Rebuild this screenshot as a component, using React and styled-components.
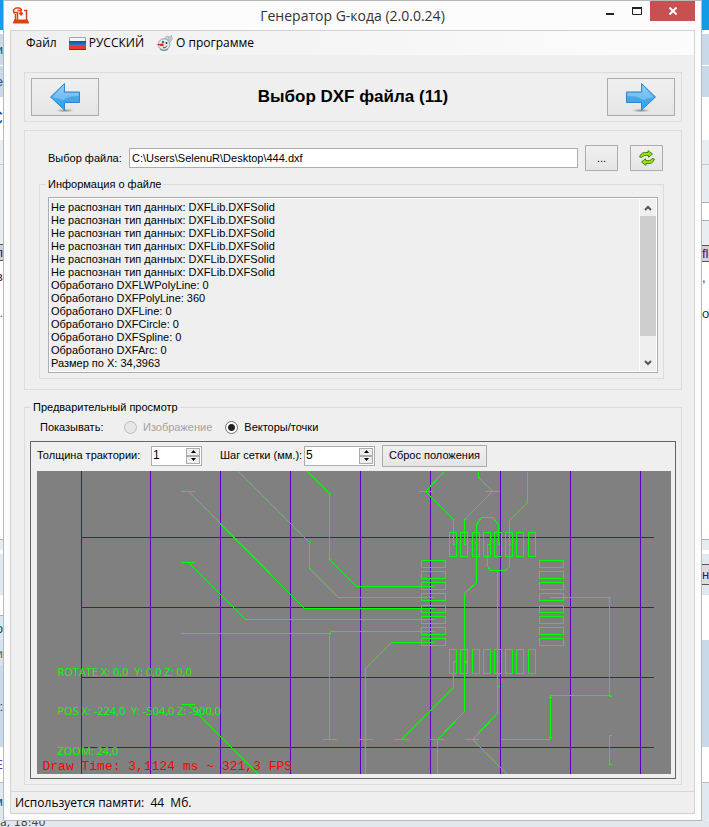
import React, { useState } from 'react';
import styled, { createGlobalStyle } from 'styled-components';

const GlobalStyle = createGlobalStyle`
    * {
        box-sizing: border-box;
    }

    body {
        margin: 0;
        background: #fff;
        color: #000;
        font-family: 'Liberation Sans', Arial, sans-serif;
        font-size: 11px;
        line-height: 13px;
    }

    button, input, textarea {
        font: inherit;
        color: inherit;
    }
`;

/* ---------- desktop behind the window ---------- */

const Desktop = styled.div`
    display: grid;
    grid-template-columns: 3px minmax(0, 1fr) 7px;
    grid-template-rows: auto 1fr;
    min-height: 100vh;
    overflow: hidden;
`;

const Strip = styled.div`
    display: flex;
    flex-direction: column;
    min-width: 0;
    overflow: hidden;
    box-shadow: inset ${p => (p.$side === 'right' ? '3px' : '-1px')} 0 3px rgba(0, 0, 0, 0.15);
`;

const Segment = styled.div`
    display: flex;
    align-items: center;
    justify-content: ${p => (p.$end ? 'flex-end' : 'flex-start')};
    flex: none;
    height: ${p => p.$h}px;
    background: ${p => p.$bg || 'transparent'};
    color: ${p => p.$color || '#333'};
    font-size: ${p => p.$size || 13}px;
    white-space: nowrap;
    overflow: hidden;
`;

const BottomStrip = styled.div`
    grid-column: 1 / -1;
    display: flex;
    align-items: flex-end;
    height: 7px;
    overflow: hidden;
    background: #dfe9ef;
    color: #444;
    font-family: 'DejaVu Sans', sans-serif;
    font-size: 11px;
    line-height: 11px;
`;

/* ---------- window ---------- */

const Window = styled.div`
    display: flex;
    flex-direction: column;
    padding: 0 6px 6px;
    border: 1px solid #b9b9b9;
    background: #fcfcfc;
`;

const TitleBar = styled.header`
    display: grid;
    grid-template-columns: 108px 1fr 108px;
    height: 29px;
`;

const AppMark = styled.div`
    padding: 5px 0 0 2px;
`;

const Title = styled.h1`
    margin: 0;
    font-family: 'Open Sans', 'Noto Sans', sans-serif;
    font-size: 14px;
    font-weight: 400;
    line-height: 29px;
    text-align: center;
    color: #333;
`;

const WindowButtons = styled.div`
    display: flex;
    justify-content: flex-end;
    align-items: flex-start;
`;

const WindowButton = styled.button`
    display: flex;
    align-items: center;
    justify-content: center;
    width: ${p => (p.$close ? 45 : 27)}px;
    height: 20px;
    padding: 0;
    border: none;
    background: ${p => (p.$close ? '#c75050' : 'transparent')};
`;

const Client = styled.div`
    flex: 1;
    display: flex;
    flex-direction: column;
    border: 1px solid #d2d2d2;
    background: #efefef;
`;

const Menu = styled.nav`
    display: flex;
    align-items: center;
    gap: 12px;
    height: 24px;
    padding-left: 15px;
    background: linear-gradient(to right, #efefef, #fcfcfc);
`;

const MenuItem = styled.button`
    display: flex;
    align-items: center;
    gap: 3px;
    padding: 0;
    border: none;
    background: none;
    font-family: 'Open Sans', 'Noto Sans', sans-serif;
    font-size: 12px;
    line-height: 16px;
`;

const Content = styled.main`
    display: flex;
    flex-direction: column;
    padding: 17px 12px 6px 13px;
`;

const Wizard = styled.section`
    display: flex;
    align-items: center;
    justify-content: space-between;
    height: 50px;
    padding: 0 6px;
    border: 1px solid #dcdcdc;
`;

const StepTitle = styled.h2`
    margin: 0;
    font-size: 17px;
    font-weight: 700;
    line-height: 20px;
`;

const Button = styled.button`
    display: flex;
    align-items: center;
    justify-content: center;
    flex: none;
    width: ${p => p.$w}px;
    height: ${p => p.$h}px;
    padding: 0;
    border: 1px solid #acacac;
    background: linear-gradient(#f0f0f0, #e5e5e5);
    white-space: nowrap;
`;

/* ---------- file section ---------- */

const FilePanel = styled.section`
    margin-top: 8px;
    padding: 14px 17px 10px 14px;
    border: 1px solid #dcdcdc;
`;

const FileRow = styled.div`
    display: flex;
    align-items: center;
    padding: 0 1px 0 9px;
`;

const FileLabel = styled.label`
    flex: none;
    width: 81px;
`;

const FileInput = styled.input`
    flex: 1;
    min-width: 0;
    height: 20px;
    margin-right: 7px;
    padding: 0 2px;
    border: 1px solid #abadb3;
    background: #fff;
`;

const Refresh = styled(Button)`
    margin-left: 12px;
`;

const Group = styled.fieldset`
    min-width: 0;
    margin: ${p => p.$top}px 0 0;
    padding: ${p => p.$pad};
    border: 1px solid #dcdcdc;
`;

const Legend = styled.legend`
    margin-left: ${p => p.$left}px;
    padding: 0 2px;
    line-height: 13px;
`;

const LogBox = styled.div`
    display: flex;
    height: 176px;
    padding: 1px;
    border: 1px solid #abadb3;
    background: #fff;
`;

const Log = styled.textarea`
    flex: 1;
    display: block;
    min-width: 0;
    padding: 2px 1px;
    border: none;
    background: #efefef;
    line-height: 13px;
    resize: none;
    overflow: hidden;
`;

const ScrollBar = styled.div`
    display: flex;
    flex-direction: column;
    width: 16px;
    margin-left: 1px;
    background: #efefef;
`;

const ScrollArrow = styled.button`
    display: flex;
    align-items: center;
    justify-content: center;
    height: 17px;
    padding: 0;
    border: none;
    background: none;
`;

const Track = styled.div`
    flex: 1;
`;

const Thumb = styled.div`
    height: 120px;
    background: #cdcdcd;
`;

/* ---------- preview section ---------- */

const ModeRow = styled.div`
    display: flex;
    align-items: center;
    height: 27px;
    padding-left: 10px;
`;

const ModeCaption = styled.span`
    width: 84px;
`;

const RadioLabel = styled.label`
    display: flex;
    align-items: center;
    gap: 6px;
    margin-right: 13px;
    color: ${p => (p.$disabled ? '#a3a3a3' : '#000')};
`;

const Radio = styled.input`
    appearance: none;
    width: 13px;
    height: 13px;
    margin: 0;
    border: 1px solid #707070;
    border-radius: 50%;
    background: #fff;

    &:checked {
        background: radial-gradient(circle, #222 0 3px, #fff 4px);
    }

    &:disabled {
        border-color: #bcbcbc;
        background: #e6e6e6;
    }
`;

const Viewport = styled.div`
    padding: 0 4px 4px 6px;
    border: 1px solid #646464;
`;

const Toolbar = styled.div`
    display: flex;
    align-items: center;
    height: 29px;
    padding-bottom: 2px;
`;

const ToolLabel = styled.label`
    flex: none;
    width: ${p => p.$w}px;
    white-space: nowrap;
`;

const Spin = styled.div`
    display: flex;
    flex: none;
    width: ${p => p.$w}px;
    height: 20px;
    margin-right: ${p => p.$gap}px;
    padding: 1px;
    border: 1px solid #abadb3;
    background: #fff;
`;

const SpinInput = styled.input`
    flex: 1;
    min-width: 0;
    padding: 0;
    border: none;
    background: none;
    font-size: 12px;
    appearance: textfield;

    &::-webkit-inner-spin-button {
        appearance: none;
        margin: 0;
    }
`;

const SpinButtons = styled.div`
    display: grid;
    grid-template-rows: 1fr 1fr;
    width: 14px;
`;

const SpinButton = styled.button`
    display: flex;
    align-items: center;
    justify-content: center;
    padding: 0;
    border: 1px solid #acacac;
    background: #efefef;
`;

const Canvas = styled.svg`
    display: block;
    width: 100%;
    height: auto;
    background: #808080;
`;

const Hud = styled.text`
    font-family: 'Open Sans', sans-serif;
    font-size: 11px;
    fill: #00ff00;
    white-space: pre;
`;

const DrawTime = styled.text`
    font-family: 'Liberation Mono', monospace;
    font-size: 13px;
    fill: #ff0000;
`;

const StatusBar = styled.footer`
    flex: 1;
    display: flex;
    align-items: center;
    min-height: 22px;
    padding-left: 4px;
    border-top: 1px solid #d7d7d7;
    font-family: 'Open Sans', 'Noto Sans', sans-serif;
    font-size: 12px;
    line-height: 16px;
    white-space: pre;
`;

/* ---------- icons ---------- */

const AppIcon = () => (
    <svg width="18" height="18" viewBox="0 0 18 18" fill="none" stroke="#dc4310" strokeWidth="1.5">
        <path d="M3.500 14V8M2 7.500L1.500 4 4 2h3.500l2.500 2" />
        <path d="M2 6.500h3.500V14M5.500 4.500h3M12 4.500h3.500M14.500 4v10M9 3.500v4.500" />
        <path d="M7 7l2 2.500L11 7z" fill="#dc4310" strokeWidth="1" />
        <path d="M1 16.500h16M2 14.500h14" strokeWidth="2" />
    </svg>
);

const FlagIcon = () => (
    <svg width="17" height="13" viewBox="0 0 17 13">
        <defs>
            <linearGradient id="flagBlue" x1="0" y1="0" x2="0" y2="1">
                <stop offset="0" stopColor="#174f96" />
                <stop offset="1" stopColor="#2c86d4" />
            </linearGradient>
        </defs>
        <path d="M0.500 0.500h16v12h-16z" fill="#f4f4f4" stroke="#a5a5a5" />
        <path d="M0 4h17v5H0z" fill="url(#flagBlue)" />
        <path d="M0 9h17v4H0z" fill="#e8392a" />
        <path d="M0 12h17v1H0z" fill="#b51d13" />
    </svg>
);

const SnowmanIcon = () => (
    <svg width="17" height="17" viewBox="0 0 17 17">
        <path d="M9 4l1.500-3L13 2l2.500-1.500.8 3.500-3.300 5z" fill="#d5e0e4" stroke="#91a3aa" strokeWidth=".7" />
        <path d="M12.500 2l-.5 3M14.800 2.500l-1.800 3.500" stroke="#91a3aa" strokeWidth=".8" />
        <circle cx="8" cy="9.500" r="5.800" fill="#dfe8eb" stroke="#84949a" strokeWidth=".8" />
        <path d="M4 14q4 3 8 0" fill="none" stroke="#7d8f96" strokeWidth="1.200" />
        <circle cx="7" cy="7" r=".9" fill="#222" />
        <circle cx="10.500" cy="8" r=".9" fill="#222" />
        <path d="M7.500 8.500v2.700L5 11 .3 9.300z" fill="#e8221c" />
        <path d="M7 12.800q2.500.7 3.800-2" fill="none" stroke="#333" strokeWidth=".9" />
    </svg>
);

const ArrowIcon = ({ right }) => (
    <svg width="32" height="32" viewBox="0 0 32 32">
        <defs>
            <linearGradient id="arrowFill" x1="0" y1="0" x2="0" y2="1">
                <stop offset="0" stopColor="#7ccaf8" />
                <stop offset=".5" stopColor="#4da6e8" />
                <stop offset="1" stopColor="#16aefc" />
            </linearGradient>
            <radialGradient id="arrowShade">
                <stop offset="0" stopColor="#555" stopOpacity=".6" />
                <stop offset="1" stopColor="#555" stopOpacity="0" />
            </radialGradient>
        </defs>
        <ellipse cx="16" cy="29.500" rx="9" ry="2" fill="url(#arrowShade)" />
        <g transform={right ? 'translate(32 0) scale(-1 1)' : undefined}>
            <path
                d="M1.500 16L15.500 2.500V11h15v10.500h-15V29z"
                fill="url(#arrowFill)"
                stroke="#2f87cf"
                strokeLinejoin="round"
            />
            <path d="M3.500 16L14.500 5v7h15v3q-12 0-15 4z" fill="#b9e2fc" opacity=".4" />
        </g>
    </svg>
);

const RefreshIcon = () => (
    <svg width="16" height="16" viewBox="0 0 16 16" fill="#a4dc0c" stroke="#3f8a12" strokeLinejoin="round">
        <path d="M.6 7Q2 1.500 9 2.500V.6L13.500 4 9.500 7.300V5.700Q4.500 4.500 2.800 7.500z" />
        <path d="M15.400 9Q14 14.500 7 13.500v1.900L2.500 12l4-3.300v1.600q5 1.200 6.700-1.800z" />
    </svg>
);

const Chevron = ({ down }) => (
    <svg width="8" height="6" viewBox="0 0 8 6">
        <path d={down ? 'M1 1l3 3 3-3' : 'M1 5l3-3 3 3'} fill="none" stroke="#555" strokeWidth="2" />
    </svg>
);

const Triangle = ({ down }) => (
    <svg width="5" height="3" viewBox="0 0 5 3">
        <path d={down ? 'M0 0h5L2.500 3z' : 'M0 3h5L2.500 0z'} />
    </svg>
);

/* ---------- data ---------- */

const LOG = [
    ...Array(6).fill('Не распознан тип данных: DXFLib.DXFSolid'),
    'Обработано DXFLWPolyLine: 0',
    'Обработано DXFPolyLine: 360',
    'Обработано DXFLine: 0',
    'Обработано DXFCircle: 0',
    'Обработано DXFSpline: 0',
    'Обработано DXFArc: 0',
    'Размер по X: 34,3963',
].join('\n');

const GRID_X = [81, 150, 220, 290, 360, 430, 500, 570, 640];
const GRID_Y = [537, 607, 677, 747];

const PAD_COLS = [449, 460, 472, 483, 494, 505, 516, 528];
const PAD_ROWS = [560, 571, 582, 593, 605, 616, 627, 638];

const TRACES = [
    'M180 491h14M188 491L304 608H434',
    'M180 562h14M188 562L245 619H434',
    'M238 471L309 542V568L338 597H434',
    'M308 542h2M308 568h2M328 493h2M328 559h2',
    'M307 471L329 493V559L356 586H434',
    'M180 633H330V631H434M329 633V739M322 739h14',
    'M434 642H391L365 668V774M358 739h14',
    'M180 704h14M188 704L258 774',
    'M442 471v2L425 491L453 519V544M418 491h14M441 473h2M452 519h2M452 544h2',
    'M478 471v6L492 491L464 519V544M485 491h14M477 477h2M463 519h2M463 544h2',
    'M527 471V502L509 520V566L505 570H490L487 566V544M486 544h3M508 544h2',
    'M498 544V524L492 517H481L476 524V582L464 593V711L437 739V774M429 739h14',
    'M475 524h2M497 544h2M475 544h2M463 661h3v2',
    'M497 570V713L472 739L507 774M464 739h14M496 686h3M496 661h2',
    'M453 661V687L401 739M393 739h15M452 661h3',
    'M549 597H610M609 597V696M608 696h3M610 695H550V738M549 739H500M548 697h3M548 737h3',
    'M609 735V764M608 735h3M608 764h3',
];

const LEFT_STRIP = [
    { h: 30, bg: '#149be6' },
    { h: 4, bg: '#fff' },
    { h: 31, bg: '#c8d9e9', text: 'и', color: '#20538c' },
    { h: 1, bg: '#fff' },
    { h: 31, bg: '#c8d9e9', text: 'е', color: '#20538c' },
    { h: 43, bg: '#fff', text: 'С', color: '#20538c', size: 18 },
    { h: 24, bg: '#e8eef1' },
    { h: 1, bg: '#c2c8cc' },
    { h: 79, bg: '#e8eef1' },
    { h: 1, bg: '#555' },
    { h: 15, bg: '#d2d2d2', text: 'п', color: '#50008c' },
    { h: 1, bg: '#555' },
    { h: 30, bg: '#fff', text: 'в', color: '#50203c' },
    { h: 42, bg: '#fff', text: 'о.', color: '#8a6030' },
    { h: 206, bg: '#fff' },
    { h: 1, bg: '#aab2b8' },
    { h: 10, bg: '#e6edf1' },
    { h: 4, bg: '#fff' },
    { h: 41, bg: '#dfe9ef' },
    { h: 20, bg: '#fff' },
    { h: 1, bg: '#aab2b8' },
    { h: 24, bg: '#dbe7f0', text: 'До', color: '#174a86' },
    { h: 26, bg: '#d4e3ef', text: 'и', color: '#8a6030' },
    { h: 81, bg: '#c8d9e9', text: ':', color: '#174a86' },
    { h: 35, bg: '#fff', text: 'Е', color: '#703090' },
    { h: 1, bg: '#bbb' },
    { h: 37, bg: '#dfe9ef', text: 'м', color: '#20538c' },
];

const RIGHT_STRIP = [
    { h: 30, bg: '#149be6' },
    { h: 4, bg: '#fff' },
    { h: 31, bg: '#c8d9e9' },
    { h: 1, bg: '#fff' },
    { h: 31, bg: '#c8d9e9' },
    { h: 43, bg: '#fff' },
    { h: 24, bg: '#e8eef1' },
    { h: 1, bg: '#c2c8cc' },
    { h: 37, bg: '#e8eef1' },
    { h: 1, bg: '#aab2b8' },
    { h: 17, bg: '#fff' },
    { h: 1, bg: '#aab2b8' },
    { h: 24, bg: '#e8eef1' },
    { h: 1, bg: '#555' },
    { h: 15, bg: '#d2d2d2', text: 'flo', color: '#50008c' },
    { h: 1, bg: '#555' },
    { h: 30, bg: '#fff', text: ' ,' },
    { h: 42, bg: '#fff', text: 'о' },
    { h: 205, bg: '#fff' },
    { h: 1, bg: '#aab2b8' },
    { h: 10, bg: '#e6edf1' },
    { h: 4, bg: '#fff' },
    { h: 10, bg: '#dfe9ef' },
    { h: 1, bg: '#555' },
    { h: 19, bg: '#dcdcdc', text: 'н', color: '#50008c' },
    { h: 1, bg: '#555' },
    { h: 10, bg: '#dfe9ef' },
    { h: 45, bg: '#fff' },
    { h: 107, bg: '#c8d9e9' },
    { h: 35, bg: '#fff' },
    { h: 1, bg: '#bbb' },
    { h: 37, bg: '#dfe9ef' },
];

const BackgroundStrip = ({ side, items }) => (
    <Strip $side={side} aria-hidden="true">
        {items.map((s, i) => (
            <Segment key={i} $h={s.h} $bg={s.bg} $color={s.color} $size={s.size} $end={side === 'left'}>
                {s.text}
            </Segment>
        ))}
    </Strip>
);

const NumberField = ({ id, width, gap, value, onChange }) => (
    <Spin $w={width} $gap={gap}>
        <SpinInput id={id} type="number" value={value} onChange={e => onChange(Number(e.target.value))} />
        <SpinButtons>
            <SpinButton aria-label="Больше" onClick={() => onChange(value + 1)}><Triangle /></SpinButton>
            <SpinButton aria-label="Меньше" onClick={() => onChange(value - 1)}><Triangle down /></SpinButton>
        </SpinButtons>
    </Spin>
);

const Preview = () => (
    <Canvas viewBox="36.5 470.5 634 303" role="img" aria-label="Векторы">
        <g fill="none" stroke="#00ff00" shapeRendering="crispEdges">
            <path
                stroke="#5a00be"
                d={GRID_X.map(x => `M${x} 470V774`).join('') + GRID_Y.map(y => `M81 ${y}H653`).join('')}
            />
            {PAD_COLS.map(x => (
                <path key={x} d={`M${x} 532h7v24h-7zM${x} 649h7v24h-7z`} />
            ))}
            {PAD_ROWS.map(y => (
                <path key={y} d={`M421 ${y}h24v7h-24zM539 ${y}h24v7h-24z`} />
            ))}
            {TRACES.map(d => (
                <path key={d} d={d} />
            ))}
        </g>
        <Hud x="57" y="675">ROTATE X: 0,0  Y: 0,0 Z: 0,0</Hud>
        <Hud x="57" y="714">POS X: -224,0  Y: -504,0 Z: -900,0</Hud>
        <Hud x="57" y="754">ZOOM: 24,0</Hud>
        <DrawTime x="42" y="769">Draw Time: 3,1124 ms ~ 321,3 FPS</DrawTime>
    </Canvas>
);

const App = () => {
    const [file, setFile] = useState('C:\\Users\\SelenuR\\Desktop\\444.dxf');
    const [thickness, setThickness] = useState(1);
    const [step, setStep] = useState(5);

    return (
        <Desktop>
            <GlobalStyle />
            <BackgroundStrip side="left" items={LEFT_STRIP} />
            <Window>
                <TitleBar>
                    <AppMark><AppIcon /></AppMark>
                    <Title>Генератор G-кода (2.0.0.24)</Title>
                    <WindowButtons>
                        <WindowButton aria-label="Свернуть">
                            <svg width="8" height="10"><path d="M0 7h8v2H0z" fill="#222" /></svg>
                        </WindowButton>
                        <WindowButton aria-label="Развернуть">
                            <svg width="10" height="8">
                                <path d="M.5 1v6.500h9V1" fill="none" stroke="#222" />
                                <path d="M0 0h10v2H0z" fill="#222" />
                            </svg>
                        </WindowButton>
                        <WindowButton $close aria-label="Закрыть">
                            <svg width="8" height="8">
                                <path d="M.5.5l7 7M7.500.5l-7 7" stroke="#fff" strokeWidth="2" />
                            </svg>
                        </WindowButton>
                    </WindowButtons>
                </TitleBar>

                <Client>
                    <Menu>
                        <MenuItem>Файл</MenuItem>
                        <MenuItem><FlagIcon />РУССКИЙ</MenuItem>
                        <MenuItem><SnowmanIcon />О программе</MenuItem>
                    </Menu>

                    <Content>
                        <Wizard>
                            <Button $w={68} $h={38} aria-label="Назад"><ArrowIcon /></Button>
                            <StepTitle>Выбор DXF файла (11)</StepTitle>
                            <Button $w={68} $h={38} aria-label="Вперёд"><ArrowIcon right /></Button>
                        </Wizard>

                        <FilePanel>
                            <FileRow>
                                <FileLabel htmlFor="file">Выбор файла:</FileLabel>
                                <FileInput id="file" value={file} onChange={e => setFile(e.target.value)} />
                                <Button $w={33} $h={26}>...</Button>
                                <Refresh $w={33} $h={26} aria-label="Обновить"><RefreshIcon /></Refresh>
                            </FileRow>
                            <Group $top={7} $pad="6px 5px 5px 8px">
                                <Legend $left={-2}>Информация о файле</Legend>
                                <LogBox>
                                    <Log readOnly aria-label="Информация о файле" value={LOG} />
                                    <ScrollBar>
                                        <ScrollArrow aria-label="Вверх"><Chevron /></ScrollArrow>
                                        <Track><Thumb /></Track>
                                        <ScrollArrow aria-label="Вниз"><Chevron down /></ScrollArrow>
                                    </ScrollBar>
                                </LogBox>
                            </Group>
                        </FilePanel>

                        <Group $top={11} $pad="0 5px 5px">
                            <Legend $left={1}>Предварительный просмотр</Legend>
                            <ModeRow>
                                <ModeCaption>Показывать:</ModeCaption>
                                <RadioLabel $disabled>
                                    <Radio type="radio" name="mode" disabled />
                                    Изображение
                                </RadioLabel>
                                <RadioLabel>
                                    <Radio type="radio" name="mode" defaultChecked />
                                    Векторы/точки
                                </RadioLabel>
                            </ModeRow>
                            <Viewport>
                                <Toolbar>
                                    <ToolLabel $w={114} htmlFor="thickness">Толщина трактории:</ToolLabel>
                                    <NumberField id="thickness" width={51} gap={18} value={thickness} onChange={setThickness} />
                                    <ToolLabel $w={84} htmlFor="step">Шаг сетки (мм.):</ToolLabel>
                                    <NumberField id="step" width={71} gap={7} value={step} onChange={setStep} />
                                    <Button $w={105} $h={22}>Сброс положения</Button>
                                </Toolbar>
                                <Preview />
                            </Viewport>
                        </Group>
                    </Content>

                    <StatusBar>Используется памяти:  44  Мб.</StatusBar>
                </Client>
            </Window>
            <BackgroundStrip side="right" items={RIGHT_STRIP} />
            <BottomStrip aria-hidden="true">a, 18:40</BottomStrip>
        </Desktop>
    );
};

export default App;
